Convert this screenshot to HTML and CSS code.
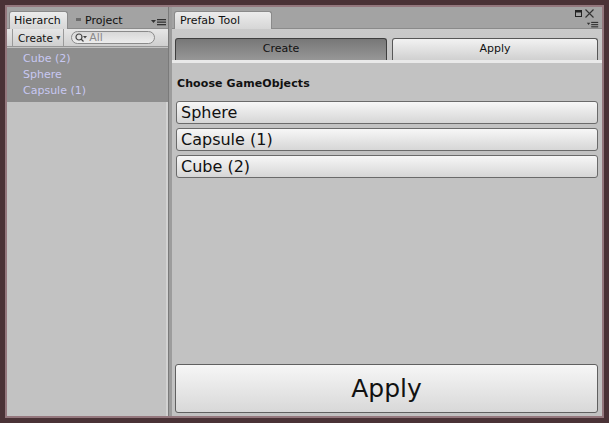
FILE: index.html
```html
<!DOCTYPE html>
<html>
<head>
<meta charset="utf-8">
<link rel="stylesheet" href="styles.css">
</head>
<body>
<div class="win">
  <div class="pane left">
    <div class="strip">
      <div class="tab active">Hierarch</div>
      <div class="tab plain"><span class="proj-ico"></span>Project</div>
      <div class="spacer"></div>
      <svg class="menu-ico" width="15" height="8" viewBox="0 0 15 8"><path d="M0 2h5l-2.5 3z" fill="#333"/><rect x="6" y="1" width="9" height="1.3" fill="#333"/><rect x="6" y="3.5" width="9" height="1.3" fill="#333"/><rect x="6" y="6" width="9" height="1.3" fill="#333"/></svg>
    </div>
    <div class="htool">
      <div class="create-btn">Create <span class="caret">▾</span></div>
      <div class="search">
        <svg width="13" height="10" viewBox="0 0 13 10"><circle cx="4" cy="4" r="3" fill="none" stroke="#444" stroke-width="1.2"/><path d="M6 6l2.5 2.5" stroke="#444" stroke-width="1.3"/><path d="M8 3h4l-2 2.5z" fill="#444"/></svg>
        <span>All</span>
      </div>
    </div>
    <div class="hlist">
      <div class="hitem">Cube (2)</div>
      <div class="hitem">Sphere</div>
      <div class="hitem">Capsule (1)</div>
    </div>
    <div class="hrest"></div>
  </div>
  <div class="split"></div>
  <div class="pane right">
    <div class="strip">
      <div class="tab active wide">Prefab Tool</div>
      <div class="spacer"></div>
      <div class="wicons">
        <div class="wtop">
          <svg width="7" height="7" viewBox="0 0 7 7"><rect x="0.5" y="0.5" width="6" height="6" fill="none" stroke="#222" stroke-width="1"/><rect x="0.5" y="0.5" width="6" height="2" fill="#222"/></svg>
          <svg width="9" height="9" viewBox="0 0 9 9"><path d="M0.5 0.5l8 8M8.5 0.5l-8 8" stroke="#333" stroke-width="1.1"/></svg>
        </div>
        <svg class="menu-ico2" width="13" height="8" viewBox="0 0 13 8"><path d="M0 2h4l-2 2.5z" fill="#333"/><rect x="5" y="1" width="8" height="1.3" fill="#333"/><rect x="5" y="3.5" width="8" height="1.3" fill="#333"/><rect x="5" y="6" width="8" height="1.3" fill="#333"/></svg>
      </div>
    </div>
    <div class="content">
      <div class="toolbar">
        <div class="tbtn pressed">Create</div>
        <div class="tbtn">Apply</div>
      </div>
      <div class="band"></div>
      <div class="label">Choose GameObjects</div>
      <div class="items">
        <div class="obtn">Sphere</div>
        <div class="obtn">Capsule (1)</div>
        <div class="obtn">Cube (2)</div>
      </div>
      <div class="fill"></div>
      <div class="bigbtn">Apply</div>
    </div>
  </div>
</div>
</body>
</html>
```
FILE: styles.css
```css
html, body {
  margin: 0;
  padding: 0;
}
body {
  width: 609px;
  height: 423px;
  background: #4a3236;
  box-sizing: border-box;
  padding: 7px;
  font-family: "DejaVu Sans", sans-serif;
  overflow: hidden;
}
.win {
  width: 595px;
  height: 409px;
  display: flex;
  background: #a3a3a3;
  box-shadow: 0 0 0 2px #94777d;
}
.pane {
  display: flex;
  flex-direction: column;
}
.left {
  width: 161px;
  background: #c2c2c2;
}
.split {
  width: 4px;
  background: #9c9c9c;
  border-left: 1px solid #7a7a7a;
  box-sizing: border-box;
}
.right {
  flex: 1;
  background: #c2c2c2;
}
.strip {
  height: 22px;
  box-sizing: border-box;
  background: #a3a3a3;
  display: flex;
  align-items: flex-end;
  padding-left: 2px;
  border-bottom: 1px solid #8b8b8b;
}
.tab {
  height: 17px;
  box-sizing: border-box;
  font-size: 11px;
  line-height: 18px;
  color: #111;
  padding: 0 4px;
}
.tab.active {
  width: 59px;
  background: linear-gradient(#ececec, #d6d6d6);
  border: 1px solid #8a8a8a;
  border-bottom: none;
  border-radius: 3px 3px 0 0;
  margin-bottom: -1px;
  height: 18px;
}
.tab.wide {
  width: 98px;
  padding-left: 5px;
}
.tab.plain {
  padding-left: 8px;
  display: flex;
  align-items: center;
  padding-top: 2px;
}
.proj-ico {
  display: inline-block;
  width: 5px;
  height: 3px;
  background: #6c6c6c;
  margin-right: 4px;
  margin-top: -2px;
}
.spacer { flex: 1; }
.menu-ico {
  margin: 0 2px 2px 0;
}
.wicons {
  display: flex;
  flex-direction: column;
  align-items: flex-end;
  margin-right: 3px;
  align-self: stretch;
  justify-content: flex-start;
  padding-top: 2px;
}
.wtop {
  display: flex;
  align-items: center;
  gap: 3px;
  margin-right: 5px;
}
.menu-ico2 {
  margin-top: 3px;
}
.htool {
  height: 18px;
  box-sizing: border-box;
  background: linear-gradient(#e6e6e6, #cfcfcf);
  border-bottom: 1px solid #969696;
  display: flex;
  align-items: center;
  padding-left: 5px;
}
.create-btn {
  font-size: 10.5px;
  color: #111;
  border-left: 1px solid #9a9a9a;
  border-right: 1px solid #9a9a9a;
  padding: 0 3px 0 5px;
  height: 17px;
  line-height: 17px;
  white-space: nowrap;
}
.caret {
  font-size: 8px;
  color: #444;
  vertical-align: 2px;
}
.search {
  margin-left: 7px;
  width: 84px;
  height: 13px;
  box-sizing: border-box;
  border: 1px solid #8a8a8a;
  border-radius: 7px;
  background: linear-gradient(#d8d8d8, #ececec);
  display: flex;
  align-items: center;
  padding-left: 3px;
  font-size: 11px;
  color: #8a8a8a;
}
.search span { margin-left: 1px; line-height: 11px; }
.hlist {
  background: #8e8e8e;
  padding: 3px 0 3px 16px;
  margin-top: 1px;
}
.hitem {
  font-size: 11px;
  height: 16px;
  line-height: 16px;
  color: #c8c8f2;
}
.hrest {
  flex: 1;
  background: #c2c2c2;
  border-right: 2px solid #d2d2d2;
}
.content {
  flex: 1;
  display: flex;
  flex-direction: column;
  padding: 0 4px 3px 3px;
  background: #c2c2c2;
}
.toolbar {
  display: flex;
  gap: 5px;
  padding-top: 9px;
  background: linear-gradient(#cacaca, #c4c4c4);
  margin: 0 -4px 0 -3px;
  padding-left: 3px;
  padding-right: 4px;
}
.tbtn {
  flex: 1;
  height: 22px;
  box-sizing: border-box;
  border: 1px solid #575757;
  border-bottom: none;
  border-radius: 3px 3px 0 0;
  background: linear-gradient(#f2f2f2, #d0d0d0);
  font-size: 11px;
  line-height: 19px;
  text-align: center;
  color: #111;
}
.tbtn.pressed {
  flex: 0 0 212px;
  background: linear-gradient(#777, #979797);
  border-color: #3e3e3e;
  color: #111;
}
.band {
  height: 3px;
  background: #e9e9e9;
  margin: 0 -4px 0 -3px;
}
.label {
  font-size: 11px;
  font-weight: bold;
  color: #111;
  padding: 13px 0 0 2px;
  height: 31px;
  line-height: 15px;
  box-sizing: border-box;
  letter-spacing: 0.1px;
}
.items {
  display: flex;
  flex-direction: column;
  gap: 4px;
  margin-top: 7px;
  margin-left: 1px;
}
.obtn {
  height: 23px;
  box-sizing: border-box;
  border: 1px solid #6a6a6a;
  border-radius: 3px;
  background: linear-gradient(#f7f7f7, #d6d6d6);
  font-size: 16px;
  line-height: 21px;
  padding-left: 4px;
  color: #111;
}
.fill { flex: 1; }
.bigbtn {
  height: 49px;
  box-sizing: border-box;
  border: 1px solid #606060;
  border-radius: 3px;
  background: linear-gradient(#f6f6f6, #d8d8d8);
  font-size: 25px;
  line-height: 47px;
  text-align: center;
  color: #111;
}
```
